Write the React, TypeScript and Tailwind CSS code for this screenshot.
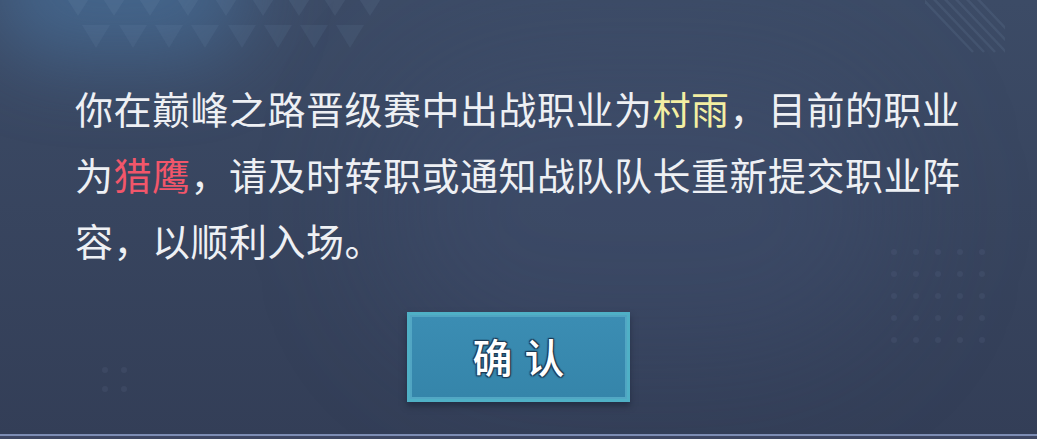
import React from 'react';

const topRow = [78, 114, 150, 188, 226, 263, 299, 335, 370];
const secondRow = [96, 133, 169, 205, 242, 278, 314, 350];

function Triangles() {
  return (
    <svg className="pointer-events-none absolute left-0 top-0" width="420" height="60" viewBox="0 0 420 60">
      {topRow.map((x) => (
        <polygon key={`a${x}`} points={`${x - 14},-6 ${x + 14},-6 ${x},16`} fill="#8aa2c8" fillOpacity="0.1" />
      ))}
      {secondRow.map((x) => (
        <polygon key={`b${x}`} points={`${x - 14},25 ${x + 14},25 ${x},48`} fill="#8aa2c8" fillOpacity="0.09" />
      ))}
    </svg>
  );
}

function Stripes() {
  return (
    <svg className="pointer-events-none absolute left-[925px] top-0" width="80" height="60" viewBox="0 0 80 60">
      {[0, 1, 2, 3, 4, 5].map((i) => (
        <line key={i} x1={i * 11 - 6} y1={-5} x2={i * 11 + 48} y2={52} stroke="#8aa2c8" strokeOpacity="0.12" strokeWidth="2.5" />
      ))}
    </svg>
  );
}

function DotGrid() {
  const cols = [0, 1, 2, 3, 4];
  return (
    <div className="pointer-events-none absolute left-[891px] top-[249px] grid grid-cols-5 gap-x-[16px] gap-y-[16px]">
      {cols.flatMap((r) =>
        cols.map((c) => <span key={`${r}-${c}`} className="h-[6px] w-[6px] rounded-full bg-[#6b7c9c]/15" />)
      )}
    </div>
  );
}

export default function App() {
  return (
    <div className="relative flex h-[439px] w-[1037px] flex-col overflow-hidden bg-gradient-to-b from-[#3c4b66] to-[#333e57]" style={{ fontFamily: '"Noto Sans CJK SC", "Noto Sans", sans-serif' }}>
      {/* top-left glow */}
      <div className="pointer-events-none absolute -left-[10px] -top-[80px] h-[140px] w-[260px] rounded-full bg-[#4f8cc4]/40 blur-2xl" />
      <div className="pointer-events-none absolute left-[380px] top-[60px] h-[300px] w-[520px] rounded-full bg-[#48587a]/25 blur-3xl" />
      <Triangles />
      <Stripes />
      <DotGrid />
      <div className="pointer-events-none absolute left-[102px] top-[367px] grid grid-cols-2 gap-[13px]">
        <span className="h-[6px] w-[6px] rounded-full bg-[#6b7c9c]/15" />
        <span className="h-[6px] w-[6px] rounded-full bg-[#6b7c9c]/15" />
        <span className="h-[6px] w-[6px] rounded-full bg-[#6b7c9c]/15" />
        <span className="h-[6px] w-[6px] rounded-full bg-[#6b7c9c]/15" />
      </div>

      <div className="relative flex flex-1 flex-col items-center">
        <p className="mt-[75px] w-[890px] self-start pl-[75px] box-content text-[38px] leading-[66px] tracking-[0.5px] text-[#eef0f4]">
          你在巅峰之路晋级赛中出战职业为<span className="text-[#f3efa2]">村雨</span>，目前的职业为<span className="text-[#f2566a]">猎鹰</span>，请及时转职或通知战队队长重新提交职业阵容，以顺利入场。
        </p>

        <button className="mt-[39px] flex h-[90px] w-[223px] items-center justify-center border-[3px] border-[#4fb0c6] bg-[#3889ad] shadow-[0_4px_6px_rgba(20,28,45,0.5)]">
          <span className="flex h-full w-full items-center justify-center border-2 border-[#5cb2cc]/70 bg-gradient-to-b from-[#3b8db3] to-[#3585aa] pb-[2px] pl-[12px] text-[40px] font-medium tracking-[12px] text-white [text-shadow:0_0_2px_#1d3a55,1px_1px_1px_#1d3a55,-1px_-1px_1px_#1d3a55,1px_-1px_1px_#1d3a55,-1px_1px_1px_#1d3a55]">
            确认
          </span>
        </button>
      </div>

      <div className="relative h-[5px] shrink-0 border-t-2 border-[#7d8db4] bg-[#3e4763]" />
    </div>
  );
}
